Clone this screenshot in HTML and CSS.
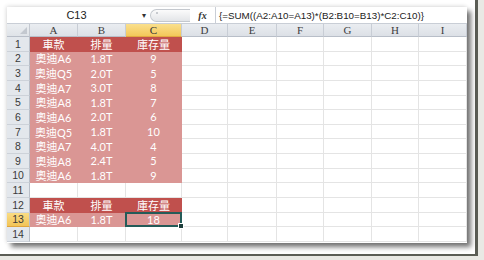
FILE: index.html
```html
<!DOCTYPE html>
<html>
<head>
<meta charset="utf-8">
<link rel="stylesheet" href="styles.css">
</head>
<body>
<div class="photo">
  <div class="win">
    <div class="fbar">
      <div class="namebox"><span class="nbtext">C13</span><span class="drop">▾</span></div>
      <div class="split"><span class="dot"></span></div>
      <div class="fx">fx</div>
      <div class="formula">{=SUM((A2:A10=A13)*(B2:B10=B13)*C2:C10)}</div>
    </div>
    <div class="sheet">
      <div class="corner"><span class="tri"></span></div>
      <div class="ch">A</div><div class="ch">B</div><div class="ch on">C</div><div class="ch">D</div><div class="ch">E</div><div class="ch">F</div><div class="ch">G</div><div class="ch">H</div><div class="ch">I</div>

      <div class="rh">1</div><div class="c hd">車款</div><div class="c hd">排量</div><div class="c hd">庫存量</div><div class="c"></div><div class="c"></div><div class="c"></div><div class="c"></div><div class="c"></div><div class="c"></div>
      <div class="rh">2</div><div class="c pk">奧迪A6</div><div class="c pk">1.8T</div><div class="c pk">9</div><div class="c"></div><div class="c"></div><div class="c"></div><div class="c"></div><div class="c"></div><div class="c"></div>
      <div class="rh">3</div><div class="c pk">奧迪Q5</div><div class="c pk">2.0T</div><div class="c pk">5</div><div class="c"></div><div class="c"></div><div class="c"></div><div class="c"></div><div class="c"></div><div class="c"></div>
      <div class="rh">4</div><div class="c pk">奧迪A7</div><div class="c pk">3.0T</div><div class="c pk">8</div><div class="c"></div><div class="c"></div><div class="c"></div><div class="c"></div><div class="c"></div><div class="c"></div>
      <div class="rh">5</div><div class="c pk">奧迪A8</div><div class="c pk">1.8T</div><div class="c pk">7</div><div class="c"></div><div class="c"></div><div class="c"></div><div class="c"></div><div class="c"></div><div class="c"></div>
      <div class="rh">6</div><div class="c pk">奧迪A6</div><div class="c pk">2.0T</div><div class="c pk">6</div><div class="c"></div><div class="c"></div><div class="c"></div><div class="c"></div><div class="c"></div><div class="c"></div>
      <div class="rh">7</div><div class="c pk">奧迪Q5</div><div class="c pk">1.8T</div><div class="c pk">10</div><div class="c"></div><div class="c"></div><div class="c"></div><div class="c"></div><div class="c"></div><div class="c"></div>
      <div class="rh">8</div><div class="c pk">奧迪A7</div><div class="c pk">4.0T</div><div class="c pk">4</div><div class="c"></div><div class="c"></div><div class="c"></div><div class="c"></div><div class="c"></div><div class="c"></div>
      <div class="rh">9</div><div class="c pk">奧迪A8</div><div class="c pk">2.4T</div><div class="c pk">5</div><div class="c"></div><div class="c"></div><div class="c"></div><div class="c"></div><div class="c"></div><div class="c"></div>
      <div class="rh">10</div><div class="c pk">奧迪A6</div><div class="c pk">1.8T</div><div class="c pk">9</div><div class="c"></div><div class="c"></div><div class="c"></div><div class="c"></div><div class="c"></div><div class="c"></div>
      <div class="rh">11</div><div class="c"></div><div class="c"></div><div class="c"></div><div class="c"></div><div class="c"></div><div class="c"></div><div class="c"></div><div class="c"></div><div class="c"></div>
      <div class="rh">12</div><div class="c hd">車款</div><div class="c hd">排量</div><div class="c hd">庫存量</div><div class="c"></div><div class="c"></div><div class="c"></div><div class="c"></div><div class="c"></div><div class="c"></div>
      <div class="rh on">13</div><div class="c pk">奧迪A6</div><div class="c pk">1.8T</div><div class="c pk sel">18</div><div class="c"></div><div class="c"></div><div class="c"></div><div class="c"></div><div class="c"></div><div class="c"></div>
      <div class="rh">14</div><div class="c"></div><div class="c"></div><div class="c"></div><div class="c"></div><div class="c"></div><div class="c"></div><div class="c"></div><div class="c"></div><div class="c"></div>
    </div>
  </div>
</div>
</body>
</html>
```

FILE: styles.css
```css
html, body {
  margin: 0;
  padding: 0;
  background: #ffffff;
}
body {
  width: 484px;
  height: 260px;
  overflow: hidden;
  background: #e9e9e4;
}
.photo {
  box-sizing: border-box;
  width: 478px;
  height: 256px;
  background: #ffffff;
  border-right: 3px solid #5b5d55;
  border-bottom: 2px solid #5b5d55;
  padding: 7px 0 0 7px;
}
.win {
  width: 460px;
  height: 236px;
  background: #ffffff;
  display: flex;
  flex-direction: column;
  box-shadow: 4px 4px 5px rgba(0,0,0,0.55), -1px -1px 4px rgba(0,0,0,0.12);
}
.fbar {
  height: 17px;
  box-sizing: border-box;
  border-bottom: 1px solid #c9ced6;
  display: flex;
  align-items: center;
  font-family: "Liberation Sans", Arial, sans-serif;
  color: #222;
}
.namebox {
  width: 143px;
  display: flex;
  align-items: center;
  height: 100%;
}
.nbtext {
  flex: 1;
  text-align: center;
  font-size: 11px;
  padding-left: 4px;
}
.drop {
  font-size: 8px;
  width: 8px;
  color: #333;
}
.split {
  width: 40px;
  height: 13px;
  box-sizing: border-box;
  border: 1px solid #c4c8ce;
  border-right: none;
  border-radius: 7px 0 0 7px;
  background: linear-gradient(#fbfbfb, #e3e5e8);
  position: relative;
}
.dot {
  position: absolute;
  left: 5px;
  top: 2px;
  width: 2px;
  height: 2px;
  background: #b9bcc2;
  border-radius: 1px;
}
.fx {
  width: 26px;
  height: 100%;
  box-sizing: border-box;
  border-right: 1px solid #c9ced6;
  font-family: "Liberation Serif", serif;
  font-style: italic;
  font-weight: bold;
  font-size: 10px;
  display: flex;
  align-items: center;
  justify-content: center;
  color: #333;
}
.formula {
  padding-left: 3px;
  font-size: 9.8px;
  white-space: nowrap;
  color: #222;
}
.sheet {
  display: grid;
  grid-template-columns: 23px 48px 48px 56px 46px 49px 47px 48px 47px 48px;
  grid-template-rows: 13px repeat(14, 14.64px);
  font-family: Lato, "Noto Sans CJK TC", sans-serif;
  font-size: 11px;
}
.corner {
  background: linear-gradient(#eceff2, #dfe3e8);
  border-right: 1px solid #c3c8d0;
  border-bottom: 1px solid #b8bec8;
  box-sizing: border-box;
  position: relative;
}
.tri {
  position: absolute;
  right: 2px;
  bottom: 2px;
  width: 0;
  height: 0;
  border-left: 7px solid transparent;
  border-bottom: 7px solid #c3c8cf;
}
.ch {
  box-sizing: border-box;
  background: linear-gradient(#eaedf1, #dce0e6);
  border-right: 1px solid #c8cdd5;
  border-bottom: 1px solid #b8bec8;
  font-family: "Liberation Serif", serif;
  font-size: 11px;
  color: #3d3d3d;
  display: flex;
  align-items: center;
  justify-content: center;
  line-height: 1;
}
.ch.on {
  background: linear-gradient(#fae08d, #f3c75a);
  border-bottom-color: #e2a940;
  color: #333;
}
.rh {
  box-sizing: border-box;
  background: #e3e7ec;
  border-right: 1px solid #b8bec8;
  border-bottom: 1px solid #cdd2d9;
  color: #3a3a3a;
  font-family: "Liberation Sans", sans-serif;
  font-size: 10.5px;
  display: flex;
  align-items: center;
  justify-content: center;
}
.rh.on {
  background: linear-gradient(#f9dc84, #f2c457);
  border-bottom-color: #e0a53c;
}
.c {
  box-sizing: border-box;
  border-right: 1px solid #e4e4e4;
  border-bottom: 1px solid #e4e4e4;
  display: flex;
  align-items: center;
  justify-content: center;
  white-space: nowrap;
  color: #ffffff;
}
.c.hd {
  background: #c0504d;
  border-color: #c0504d;
}
.c.pk {
  background: #da9694;
  border-color: #da9694;
}
.sel {
  position: relative;
}
.sel::after {
  content: "";
  position: absolute;
  left: -1px;
  top: -1px;
  right: -1px;
  bottom: -1px;
  border: 2px solid #245b58;
}
.sel::before {
  content: "";
  position: absolute;
  right: -3px;
  bottom: -3px;
  width: 4px;
  height: 4px;
  background: #1f3f3d;
  border: 1px solid #fff;
  z-index: 2;
}
```
